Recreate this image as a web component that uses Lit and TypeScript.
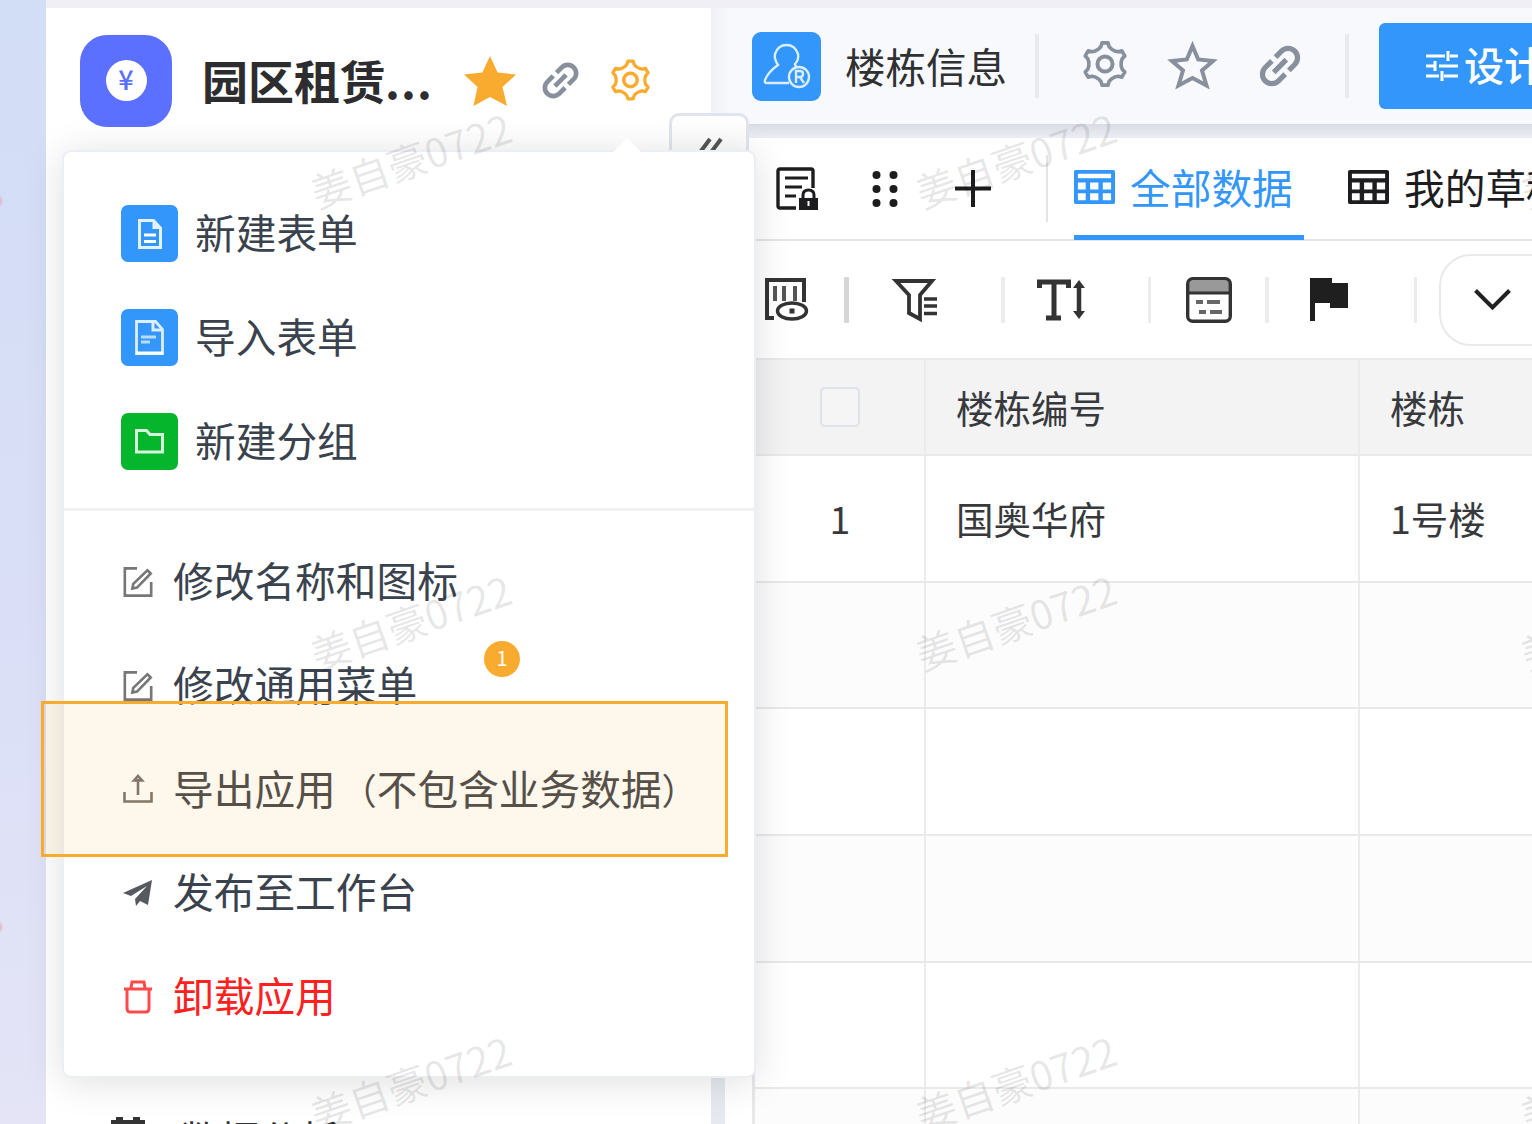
import { LitElement, html, css, svg } from "lit";
import { customElement } from "lit/decorators.js";

const gearOutline = Array.from({ length: 6 }, (_, k) =>
  [[-23, 15.6], [-13, 17.2], [-8, 20.4], [8, 20.4], [13, 17.2], [23, 15.6]]
    .map(([d, r]) => {
      const a = ((k * 60 - 90 + d) * Math.PI) / 180;
      return `${(22 + r * Math.cos(a)).toFixed(2)},${(22 + r * Math.sin(a)).toFixed(2)}`;
    })
    .join(" ")
).join(" ");
const gear = svg`<polygon points=${gearOutline} fill="none" stroke="currentColor" stroke-width="3.500" stroke-linejoin="round"/><circle cx="22" cy="22" r="7.200" fill="none" stroke="currentColor" stroke-width="3.800"/>`;
const link = svg`<g fill="none" stroke="currentColor" stroke-width="5" transform="rotate(-45 22 22)"><path d="M20 13H11a9 9 0 0 0 0 18h9M25 13h8a9 9 0 0 1 0 18h-8M13.500 22h17"/></g>`;
const grid = svg`<path fill-rule="evenodd" fill="currentColor" d="M2 0h38q2 0 2 2v31q0 2-2 2H2q-2 0-2-2V2q0-2 2-2zM4 4v4.500h34V4zM4 13v7h8v-7zM16.500 13v7h8.500v-7zM29.500 13v7H38v-7zM4 24v7h8v-7zM16.500 24v7h8.500v-7zM29.500 24v7H38v-7z"/>`;
const edit = svg`<g fill="none" stroke="#777" stroke-width="2.800"><path d="M16 2.500H3v29h28V17"/><path d="M12 19 27 4.500l3.500 3.500L16 23l-5 1z"/></g>`;

@customElement("app-root")
export class AppRoot extends LitElement {
  static styles = css`
    :host { display: block; width: 1532px; height: 1124px; overflow: hidden; position: relative; background: #fff;
      font-family: "Noto Sans CJK SC", sans-serif; color: #303133; }
    * { box-sizing: border-box; }
    svg { display: block; flex: none; overflow: visible; }
    .page { display: flex; height: 1124px; }
    .rail { width: 46px; flex: none; position: relative; overflow: hidden; background: linear-gradient(#d2ddf6, #dadff7 55%, #e4e4f6); }
    .speck { position: absolute; left: -6px; width: 8px; height: 10px; border-radius: 50%; background: #e6b5bf; filter: blur(1px); }
    .s1 { top: 196px; } .s2 { top: 922px; }
    .col { flex: 1; min-width: 0; display: flex; flex-direction: column; }
    .strip { height: 8px; flex: none; background: #f0eff5; }
    .cols { flex: 1; display: flex; min-height: 0; }
    .side { width: 665px; flex: none; background: #fff; display: flex; flex-direction: column; overflow: hidden; }
    .brand { display: flex; align-items: center; height: 145px; padding-left: 34px; flex: none; }
    .logo { width: 92px; height: 92px; border-radius: 27px; background: #5c70ff; display: flex; align-items: center; justify-content: center; }
    .yen { width: 41px; height: 41px; border-radius: 50%; background: #fff; color: #5c70ff; font: 500 27px/38px "Noto Sans CJK SC", sans-serif; text-align: center; }
    .name { font-size: 46px; font-weight: 700; margin-left: 30px; width: 262px; white-space: nowrap; line-height: 60px; padding-bottom: 3px; color: #2d2d2f; }
    .dots { letter-spacing: 1px; margin-left: -1px; }
    .orange { color: #f9ab2f; }
    .grey { color: #87909c; }
    .brand .link { margin: 0 29px 0 24px; }
    .brand .orange:last-child { margin-bottom: 2px; }
    .below { margin-top: auto; height: 7px; display: flex; gap: 35px; padding-left: 65px; font-size: 40px; line-height: 42px; white-space: nowrap; }
    .main { flex: 1; min-width: 0; display: flex; flex-direction: column; background: #e6e9ef; }
    .head { height: 116px; flex: none; background: linear-gradient(90deg, #eff1f6, #f8f9fc 20px); display: flex; align-items: center; padding-left: 41px; white-space: nowrap; }
    .user { flex: none; width: 69px; height: 69px; border-radius: 9px; background: #3296fa; display: flex; align-items: center; justify-content: center; margin-right: 24px; }
    .title { flex: none; font-size: 40.500px; width: 190px; line-height: 50px; }
    .bar { width: 4px; height: 64px; background: #e9eaed; flex: none; }
    .head .g { margin: 0 40px 4px 43px; }
    .head .s { margin-bottom: 2px; }
    .head .l { margin: 0 42px 0 40px; }
    .btn { height: 86px; margin-left: 30px; background: #3296fa; border-radius: 6px; color: #fff; font-size: 40px; font-weight: 500; display: flex; align-items: center; gap: 6px; padding-left: 47px; width: 220px; flex: none; }
    .btn span { padding-bottom: 5px; }
    .gap { height: 14px; flex: none; background: linear-gradient(#d9dce3, #eceef4); }
    .card { flex: 1; min-height: 0; margin-left: 14px; background: #fff; display: flex; flex-direction: column; }
    .tabs { height: 103px; flex: none; border-bottom: 2px solid #e6e6e6; display: flex; align-items: center; padding-left: 51px; white-space: nowrap; color: #1d1d1f; }
    .tabs .d { margin: 0 57px 0 54px; }
    .thin { width: 2px; height: 67px; background: #e4e4e4; margin: 0 26px 0 55px; flex: none; }
    .tab { display: flex; align-items: center; gap: 15px; font-size: 40.700px; height: 103px; flex: none; }
    .tab span { padding-bottom: 4px; }
    .tab svg { margin-bottom: 4px; }
    .on { color: #3296fa; width: 230px; border-bottom: 5px solid #3296fa; padding-top: 5px; margin-right: 44px; }
    .tools { height: 117px; flex: none; display: flex; align-items: center; padding-left: 39px; color: #333; }
    .v { width: 4px; height: 46px; background: #ececec; flex: none; }
    .v1 { background: #d6d6d6; width: 5px; margin: 0 45px 0 36px; }
    .v2 { margin: 0 32px 0 63px; }
    .v3 { width: 3px; margin: 0 35px 0 63px; }
    .v4 { margin: 0 41px 0 33px; }
    .v5 { width: 3px; margin: 0 22px 0 66px; }
    .pill { height: 92px; width: 140px; flex: none; border: 2px solid #e9e9e9; border-radius: 32px; display: flex; align-items: center; padding-left: 33px; }
    .table { flex: 1; margin-left: 27px; border-left: 3px solid #e7e8ea; border-top: 2px solid #e9e9e9; overflow: hidden; }
    .tr { display: grid; grid-template-columns: 171px 434px 400px; height: 126.700px; border-bottom: 2px solid #e9e9e9; font-size: 37.500px; line-height: 50px; }
    .tr > div { border-right: 2px solid #ebebeb; display: flex; align-items: center; padding-left: 30px; color: #37393d; }
    .tr > div:first-child { justify-content: center; padding-left: 1px; }
    .tr + .tr > div { padding-bottom: 1px; }
    .tr.th { height: 96px; background: #f3f3f3; }
    .tr:nth-child(odd):not(.th) { background: #fcfcfc; }
    .check { width: 40px; height: 40px; border: 2px solid #dfe2e9; border-radius: 5px; background: #f5f5f5; }
    .fold { position: absolute; left: 669px; top: 113px; width: 80px; height: 60px; border: 3px solid #e1e4ee; border-radius: 10px; background: linear-gradient(#fff, #fbfbfb 30px); padding: 21px 0 0 26px; }
    .menu { position: absolute; left: 62px; top: 150px; width: 694px; height: 928px; border: 2px solid #eceef6; border-radius: 9px; background: #fff; box-shadow: 0 4px 38px rgba(0,0,0,.13); padding-top: 30px; font-size: 40.700px; color: #3a424e; }
    .tip { position: absolute; left: 548px; top: -14px; }
    .row { height: 103.700px; display: flex; align-items: center; padding-left: 57px; gap: 17px; white-space: nowrap; }
    .row > span { padding-bottom: 4px; }
    .act { padding-left: 58px; gap: 19px; }
    .tile { width: 57px; height: 57px; border-radius: 7px; background: #3296fa; display: flex; align-items: center; justify-content: center; }
    .green { background: #05b52c; }
    .sep { height: 3px; background: #f0f1f3; margin: 15px 0 19px; }
    .red { color: #ff2020; }
    .dark { color: #47484b; }
    .paren { font-size: 36px; line-height: 1; }
    .open { margin-left: 5px; }
    .focus { position: absolute; left: 41px; top: 701px; width: 687px; height: 156px; border: 3px solid #f9ab2f; background: rgba(249,171,47,.09); }
    .badge { position: absolute; left: 484px; top: 641px; width: 36px; height: 36px; border-radius: 50%; background: #f9ab2f; color: #fff; font: 20px/34px "Noto Sans CJK SC", sans-serif; text-align: center; }
    .marks { position: absolute; left: 108px; top: -72px; width: 1815px; display: grid; grid-template-columns: repeat(3, 605px); grid-auto-rows: 461.500px; pointer-events: none; }
    .marks span { display: flex; align-items: center; justify-content: center; transform: rotate(-19deg); font-size: 40px; color: rgba(0,0,0,.1); white-space: nowrap; }
  `;

  private menuRow(icon: unknown, label: string, green = false) {
    return html`<div class="row"><div class="tile ${green ? "green" : ""}">${icon}</div><span>${label}</span></div>`;
  }

  render() {
    const doc = html`<svg width="24" height="30" viewBox="0 0 24 30"><path d="M1.500 1.500h14l7 7.500v19.500h-21z" fill="none" stroke="#e4f1ff" stroke-width="3"/><path d="M14.500 1v9h8z" fill="#e4f1ff"/><path d="M6 16h12M6 22.500h12" stroke="#fff" stroke-width="3"/></svg>`;
    const sheet = html`<svg width="29" height="35" viewBox="0 0 29 35"><path d="M1.500 1.500h19l7 8v24h-26z" fill="none" stroke="#dceeff" stroke-width="2.800"/><path d="M18 1v9h9" fill="none" stroke="#dceeff" stroke-width="3"/><path d="M6 17h15M6 22h9" stroke="#b8dcff" stroke-width="3"/><path d="M1 33h27" stroke="#fff" stroke-width="3"/></svg>`;
    const folder = html`<svg width="29" height="25" viewBox="0 0 29 25"><path d="M1.500 23V1.500h10l3.500 4h12.500V23z" fill="none" stroke="#d5f5dc" stroke-width="3"/></svg>`;
    return html`
      <div class="page">
        <div class="rail"><i class="speck s1"></i><i class="speck s2"></i></div>
        <div class="col">
          <div class="strip"></div>
          <div class="cols">
            <div class="side">
              <div class="brand">
                <div class="logo"><div class="yen">¥</div></div>
                <div class="name">园区租赁<span class="dots">...</span></div>
                <svg class="orange" width="52" height="50" viewBox="0 0 52 50"><path fill="currentColor" d="M26 0l7.600 16.500L52 18.500 38.500 31 43 50 26 41 9.500 50 13.500 31 0 18.500l18.400-2z"/></svg>
                <svg class="grey link" width="41" height="41" viewBox="0 0 44 44">${link}</svg>
                <svg class="orange" width="41" height="42" viewBox="0 0 44 44">${gear}</svg>
              </div>
              <div class="below">
                <svg width="34" height="40" viewBox="0 0 34 40"><path fill="#333" d="M5 0h7v3h10V0h7v3h5v37H0V3h5z"/></svg><span>数据分析</span>
              </div>
            </div>
            <div class="main">
              <div class="head">
                <div class="user"><svg width="48" height="46" viewBox="0 0 48 46" fill="none" stroke="#d9edff" stroke-width="2.400"><path d="M26 40H4q-3 0-2-3 3-8 13-15-4-6-3-11 3-9 11.500-9T35 11q1 6-3 10l1 3"/><circle cx="36" cy="34" r="10"/><path d="M33 40V28h4q3 0 3 3t-3 3h-4M37 34l4 6"/></svg></div>
                <div class="title">楼栋信息</div>
                <div class="bar"></div>
                <svg class="grey g" width="46" height="48" viewBox="0 0 44 44">${gear}</svg>
                <svg class="grey s" width="49" height="48" viewBox="0 0 49 48"><path fill="none" stroke="currentColor" stroke-width="4" d="M24.500 5l5.700 13.500L45 20 34 29.500 38.500 44.500 24.500 37 10.500 44.500 15 29.500 4 20l14.800-1.500z"/></svg>
                <svg class="grey l" width="46" height="46" viewBox="0 0 44 44">${link}</svg>
                <div class="bar"></div>
                <div class="btn"><svg width="32" height="32" viewBox="0 0 32 32" fill="none" stroke="#fff" stroke-width="3"><path d="M0 6h19M24 6h8M22 1v10M0 16h9M13 16h19M9 11v10M0 26h13M18 26h14M16 21v10"/></svg><span>设计表单</span></div>
              </div>
              <div class="gap"></div>
              <div class="card">
                <div class="tabs">
                  <svg width="42" height="44" viewBox="0 0 42 44"><path d="M20 41H4q-2 0-2-2V4q0-2 2-2h31q2 0 2 2v17" fill="none" stroke="currentColor" stroke-width="3.400"/><path d="M9 11h23M9 20h17M9 29h11" stroke="currentColor" stroke-width="3"/><path d="M23 31h19v12H23z" fill="currentColor"/><path d="M27 32v-4q0-5 5.500-5t5.500 5v4" fill="none" stroke="currentColor" stroke-width="3"/><path d="M32.500 34v5" stroke="#fff" stroke-width="2"/></svg>
                  <svg class="d" width="26" height="38" viewBox="0 0 26 38" fill="currentColor"><circle cx="4.500" cy="5" r="4"/><circle cx="21.500" cy="5" r="4"/><circle cx="4.500" cy="19" r="4"/><circle cx="21.500" cy="19" r="4"/><circle cx="4.500" cy="33" r="4"/><circle cx="21.500" cy="33" r="4"/></svg>
                  <svg width="36" height="37" viewBox="0 0 36 37"><path d="M0 18.500h36M18 0v37" stroke="currentColor" stroke-width="4"/></svg>
                  <div class="thin"></div>
                  <div class="tab on"><svg width="41" height="36" viewBox="0 0 42 35">${grid}</svg><span>全部数据</span></div>
                  <div class="tab"><svg width="41" height="36" viewBox="0 0 42 35">${grid}</svg><span>我的草稿</span></div>
                </div>
                <div class="tools">
                  <svg width="44" height="43" viewBox="0 0 44 43" fill="none" stroke="currentColor"><path stroke-width="4" d="M10 40H3V2h37v22"/><path stroke-width="4" d="M11 8v15M20 8v15M31 8v15" stroke="#555"/><ellipse cx="28" cy="33" rx="14.500" ry="8" stroke-width="3.400"/><path d="M25.500 30.500h5v5h-5z" fill="currentColor" stroke="none"/></svg>
                  <div class="v v1"></div>
                  <svg width="44" height="44" viewBox="0 0 44 44" fill="none" stroke="currentColor" stroke-width="3.800"><path d="M2 3h36L26 17v24l-11-6V17z"/><path d="M30 21h13M30 28h13M30 35.500h13" stroke-width="3.300"/></svg>
                  <div class="v v2"></div>
                  <svg width="48" height="42" viewBox="0 0 48 42" fill="none" stroke="currentColor" stroke-width="5"><path d="M2.500 9V3h29v6M17 3v36M9 39h15"/><path d="M42 5v31" stroke-width="4.500"/><path d="M36 9l6-8 6 8zM36 32l6 8 6-8z" fill="currentColor" stroke="none"/></svg>
                  <div class="v v3"></div>
                  <svg width="46" height="46" viewBox="0 0 46 46"><path d="M3 4h40v12H3z" fill="#999"/><rect x="1.700" y="1.700" width="42.600" height="42.600" rx="5" fill="none" stroke="currentColor" stroke-width="3.400"/><path d="M2 16h42" stroke="currentColor" stroke-width="3"/><path d="M10 25h7M21 25h13M13 35h7M24 35h12" stroke="#666" stroke-width="4"/></svg>
                  <div class="v v4"></div>
                  <svg width="38" height="43" viewBox="0 0 38 43"><path fill="#1f1f1f" d="M0 0h22v5h16v25H20v-5H5v18H0z"/></svg>
                  <div class="v v5"></div>
                  <div class="pill"><svg width="37" height="23" viewBox="0 0 37 23"><path d="M1.500 2.500l17 17 17-17" fill="none" stroke="#222" stroke-width="4"/></svg></div>
                </div>
                <div class="table">
                  <div class="tr th"><div><span class="check"></span></div><div>楼栋编号</div><div>楼栋</div></div>
                  <div class="tr"><div>1</div><div>国奥华府</div><div>1号楼</div></div>
                  ${[0, 1, 2, 3, 4].map(() => html`<div class="tr"><div></div><div></div><div></div></div>`)}
                </div>
              </div>
            </div>
          </div>
        </div>
      </div>
      <div class="fold"><svg width="26" height="24" viewBox="0 0 26 24"><path d="M12 2L3 14l9 12M23 2l-9 12 9 12" fill="none" stroke="#555" stroke-width="4"/></svg></div>
      <div class="menu">
        <svg class="tip" width="30" height="16" viewBox="0 0 30 16"><path d="M0 15L15 0l15 15z" fill="#fff"/></svg>
        ${this.menuRow(doc, "新建表单")}
        ${this.menuRow(sheet, "导入表单")}
        ${this.menuRow(folder, "新建分组", true)}
        <div class="sep"></div>
        <div class="row act"><svg width="32" height="34" viewBox="0 0 34 34">${edit}</svg><span>修改名称和图标</span></div>
        <div class="row act"><svg width="32" height="34" viewBox="0 0 34 34">${edit}</svg><span>修改通用菜单</span></div>
        <div class="row act dark"><svg width="32" height="28" viewBox="0 0 32 28" fill="none" stroke="#77736e" stroke-width="2.600"><path d="M2.500 17v9.500h27V17"/><path d="M16 20V4M12 5.500L16 1l4 4.500z"/></svg><span>导出应用<span class="paren open">（</span>不包含业务数据<span class="paren">）</span></span></div>
        <div class="row act"><svg width="32" height="26" viewBox="0 0 32 26"><path d="M1 13L30 0l-4 25-8-4-4 5-1-7L25 6 9 16z" fill="#555a60"/></svg><span>发布至工作台</span></div>
        <div class="row act red"><svg width="32" height="34" viewBox="0 0 32 34" fill="none" stroke="#ff4a4a" stroke-width="3"><path d="M2 9h28M9 8l1-6h12l1 6M5 10v18q0 4 3 4h16q3 0 3-4V10"/></svg><span>卸载应用</span></div>
      </div>
      <div class="marks">${Array.from({ length: 9 }, () => html`<span>姜自豪0722</span>`)}</div>
      <div class="focus"></div>
      <div class="badge">1</div>
    `;
  }
}
